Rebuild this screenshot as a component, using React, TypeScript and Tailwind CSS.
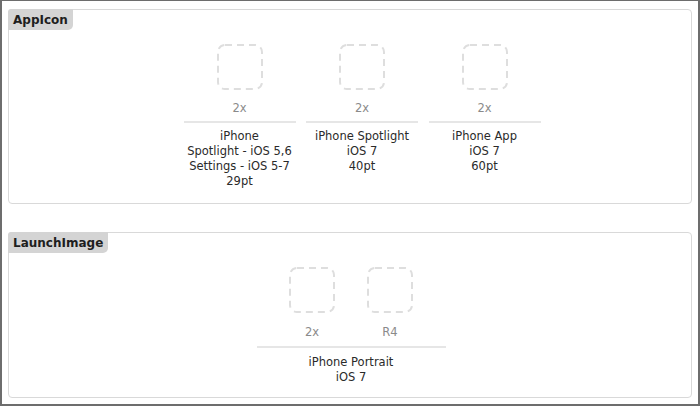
import React from 'react';

const font = { fontFamily: '"DejaVu Sans", "Liberation Sans", sans-serif' };

// Empty image well: dashed rounded square
const Well = () => (
  <svg width="46" height="46" viewBox="0 0 46 46" className="block">
    <rect
      x="1"
      y="1"
      width="44"
      height="44"
      rx="7"
      fill="none"
      stroke="#dedede"
      strokeWidth="2"
      strokeDasharray="7 5"
    />
  </svg>
);

const Tab = ({ title }: { title: string }) => (
  <div className="self-start -mt-px -ml-px h-[21px] px-[5px] flex items-center bg-[#d4d4d4] rounded-tl-[3px] rounded-br-[5px] text-[12px] font-bold text-[#1e1e1e] leading-none">
    {title}
  </div>
);

const iconSlots = [
  { scale: '2x', lines: ['iPhone', 'Spotlight - iOS 5,6', 'Settings - iOS 5-7', '29pt'] },
  { scale: '2x', lines: ['iPhone Spotlight', 'iOS 7', '40pt'] },
  { scale: '2x', lines: ['iPhone App', 'iOS 7', '60pt'] },
];

export default function App() {
  return (
    <div
      style={font}
      className="w-[700px] h-[406px] bg-white border-x-2 border-b-2 border-t border-[#6d6d6d] px-[6px] pt-2 flex flex-col"
    >
      {/* AppIcon */}
      <div className="h-[195px] border border-[#d9d9d9] rounded-[4px] flex flex-col">
        <Tab title="AppIcon" />
        <div className="flex justify-center gap-[10.5px] ml-[24px] mt-[14px]">
          {iconSlots.map((slot, i) => (
            <div key={i} className="w-[112px] flex flex-col items-center">
              <Well />
              <div className="mt-[11px] text-[11.5px] leading-[15px] text-[#8a8a8a]">{slot.scale}</div>
              <div className="mt-[5px] w-full h-[2px] bg-[#e6e6e6]" />
              <div className="mt-[6px] text-center text-[11.5px] leading-[15px] text-[#2a2a2a] whitespace-nowrap">
                {slot.lines.map((l) => (
                  <div key={l}>{l}</div>
                ))}
              </div>
            </div>
          ))}
        </div>
      </div>

      {/* LaunchImage */}
      <div className="mt-[28px] h-[166px] border border-[#d9d9d9] rounded-[4px] flex flex-col">
        <Tab title="LaunchImage" />
        <div className="flex flex-col items-center mt-[14px] ml-[2px]">
          <div className="flex gap-[32px]">
            {['2x', 'R4'].map((s) => (
              <div key={s} className="flex flex-col items-center">
                <Well />
                <div className="mt-[12px] text-[11.5px] leading-[15px] text-[#8a8a8a]">{s}</div>
              </div>
            ))}
          </div>
          <div className="mt-[6px] w-[189px] h-[2px] bg-[#e6e6e6]" />
          <div className="mt-[7px] text-center text-[11.5px] leading-[15px] text-[#2a2a2a]">
            <div>iPhone Portrait</div>
            <div>iOS 7</div>
          </div>
        </div>
      </div>
    </div>
  );
}
